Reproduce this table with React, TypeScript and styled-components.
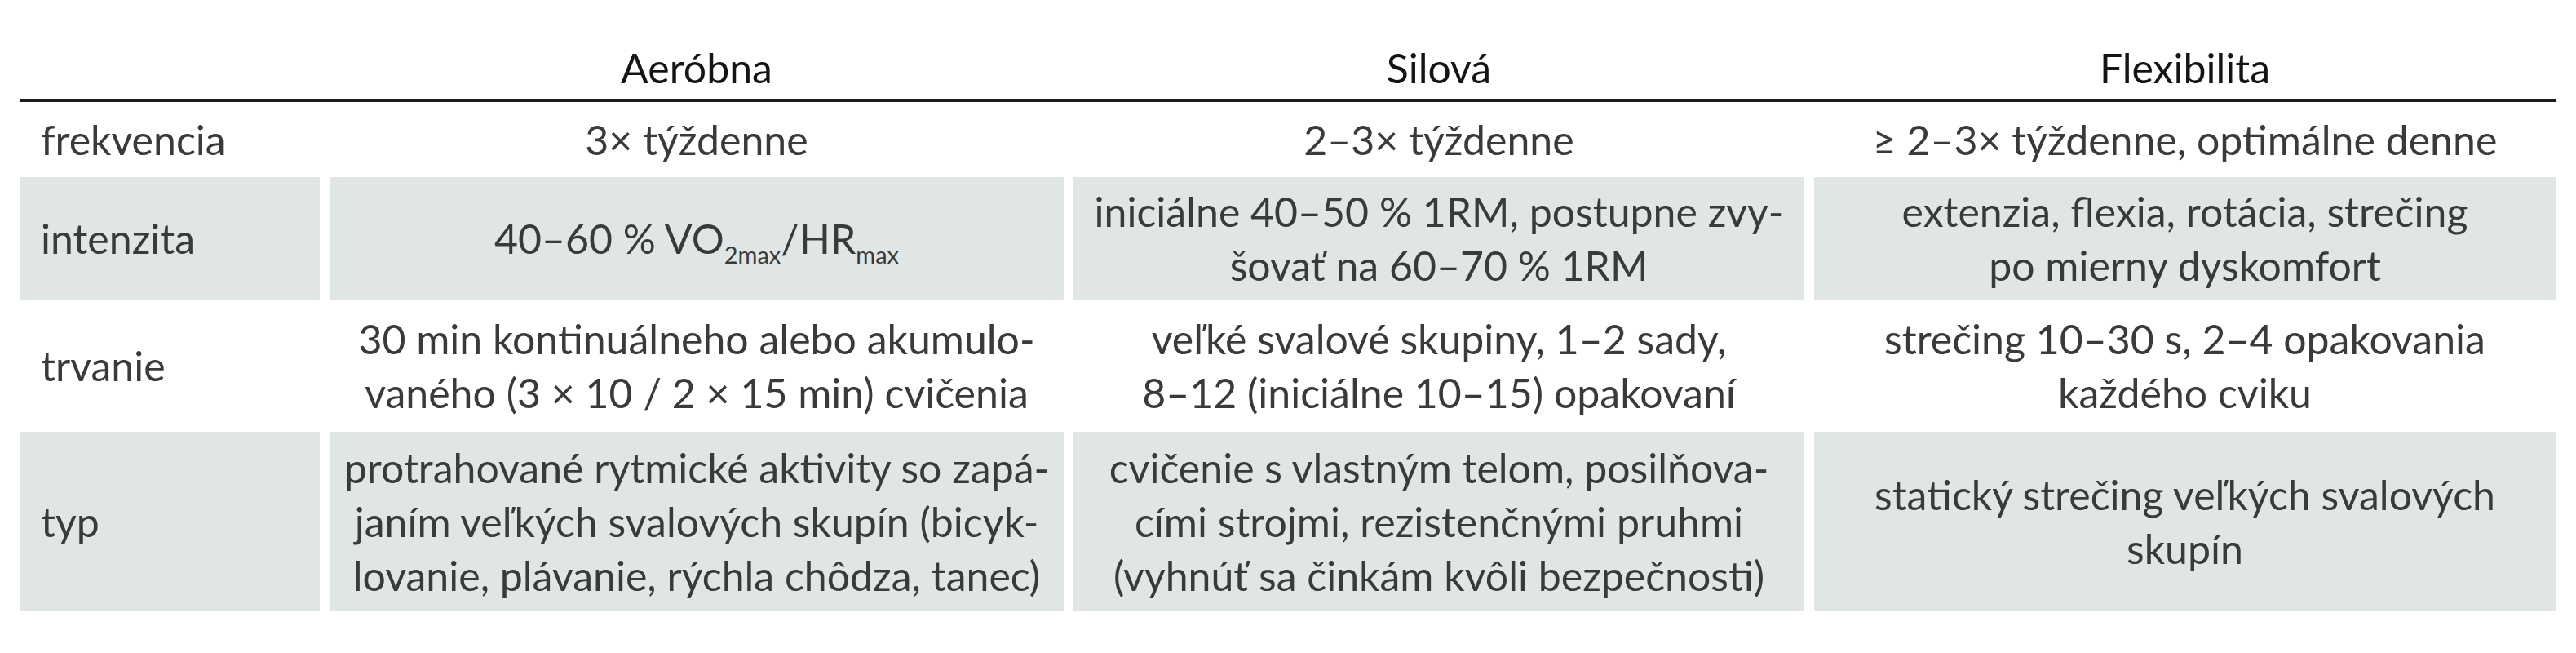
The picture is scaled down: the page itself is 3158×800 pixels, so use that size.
import React from "react";
import styled, { createGlobalStyle } from "styled-components";

const GlobalStyle = createGlobalStyle`
  html, body {
    margin: 0;
    padding: 0;
    background: #ffffff;
  }
  body {
    font-family: Lato, "Open Sans", "Liberation Sans", sans-serif;
  }
`;

const Page = styled.div`
  width: 3158px;
  height: 800px;
  box-sizing: border-box;
  padding: 0 25px;
  background: #ffffff;
`;

const Table = styled.div`
  display: flex;
  flex-direction: column;
`;

const Row = styled.div<{ $h?: number }>`
  display: grid;
  grid-template-columns: 367px 900px 896px 1fr;
  column-gap: 12px;
  height: ${(p) => (p.$h ? `${p.$h}px` : "auto")};
`;

const HeadRow = styled(Row)`
  padding-top: 50px;
  padding-bottom: 5px;
  border-bottom: 4px solid #1b1b1b;
`;

const HeadCell = styled.div`
  font-size: 50px;
  line-height: 66px;
  color: #141414;
  text-align: center;
  white-space: nowrap;
`;

const Cell = styled.div<{ $shade?: boolean; $label?: boolean }>`
  display: flex;
  align-items: center;
  justify-content: ${(p) => (p.$label ? "flex-start" : "center")};
  text-align: ${(p) => (p.$label ? "left" : "center")};
  padding: 0 ${(p) => (p.$label ? "25px" : "0")};
  background: ${(p) => (p.$shade ? "#dfe6e5" : "transparent")};
  font-size: 50px;
  line-height: 66px;
  color: #3a3a3a;
  white-space: nowrap;
  box-sizing: border-box;
`;

const Sub = styled.sub`
  font-size: 0.58em;
  line-height: 0;
  vertical-align: -0.4em;
`;

type RowData = {
  label: string;
  shade: boolean;
  h: number;
  cells: React.ReactNode[];
};

const rows: RowData[] = [
  {
    label: "frekvencia",
    shade: false,
    h: 92,
    cells: ["3× týždenne", "2–3× týždenne", "≥ 2–3× týždenne, optimálne denne"],
  },
  {
    label: "intenzita",
    shade: true,
    h: 150,
    cells: [
      <>
        40–60 % VO<Sub>2max</Sub>/HR<Sub>max</Sub>
      </>,
      <>
        iniciálne 40–50 % 1RM, postupne zvy-
        <br />
        šovať na 60–70 % 1RM
      </>,
      <>
        extenzia, flexia, rotácia, strečing
        <br />
        po mierny dyskomfort
      </>,
    ],
  },
  {
    label: "trvanie",
    shade: false,
    h: 162,
    cells: [
      <>
        30 min kontinuálneho alebo akumulo-
        <br />
        vaného (3 × 10 / 2 × 15 min) cvičenia
      </>,
      <>
        veľké svalové skupiny, 1–2 sady,
        <br />
        8–12 (iniciálne 10–15) opakovaní
      </>,
      <>
        strečing 10–30 s, 2–4 opakovania
        <br />
        každého cviku
      </>,
    ],
  },
  {
    label: "typ",
    shade: true,
    h: 220,
    cells: [
      <>
        protrahované rytmické aktivity so zapá-
        <br />
        janím veľkých svalových skupín (bicyk-
        <br />
        lovanie, plávanie, rýchla chôdza, tanec)
      </>,
      <>
        cvičenie s vlastným telom, posilňova-
        <br />
        cími strojmi, rezistenčnými pruhmi
        <br />
        (vyhnúť sa činkám kvôli bezpečnosti)
      </>,
      <>
        statický strečing veľkých svalových
        <br />
        skupín
      </>,
    ],
  },
];

export default function App() {
  return (
    <>
      <GlobalStyle />
      <Page>
        <Table>
          <HeadRow>
            <HeadCell />
            <HeadCell>Aeróbna</HeadCell>
            <HeadCell>Silová</HeadCell>
            <HeadCell>Flexibilita</HeadCell>
          </HeadRow>
          {rows.map((r) => (
            <Row key={r.label} $h={r.h}>
              <Cell $shade={r.shade} $label>
                {r.label}
              </Cell>
              {r.cells.map((c, i) => (
                <Cell key={i} $shade={r.shade}>
                  <span>{c}</span>
                </Cell>
              ))}
            </Row>
          ))}
        </Table>
      </Page>
    </>
  );
}
